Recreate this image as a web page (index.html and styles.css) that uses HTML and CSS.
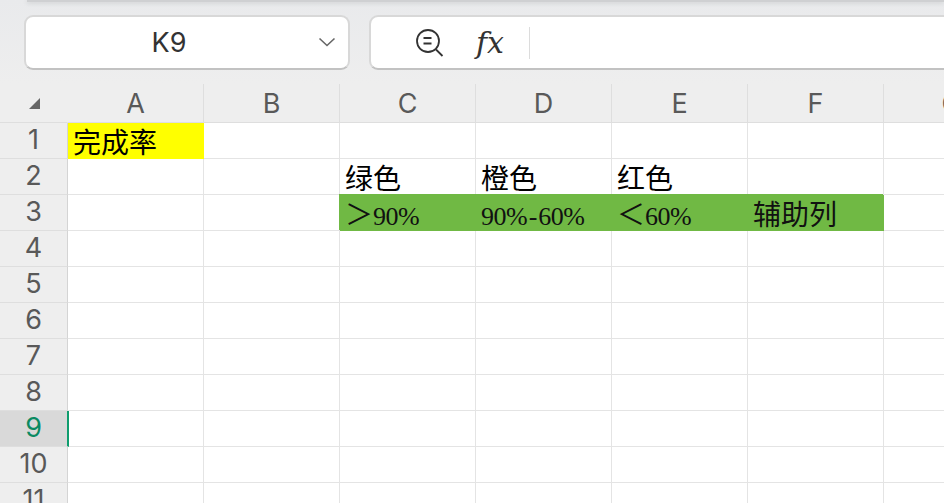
FILE: index.html
```html
<!DOCTYPE html>
<html lang="en">
<head>
    <meta charset="UTF-8">
    <title>K9</title>
    <link rel="stylesheet" href="styles.css">
</head>
<body>
    <div class="toolbar">
        <div class="top-edge"></div>
        <div class="boxes">
            <div class="name-box">
                <span class="name-text">K9</span>
                <svg class="chevron" width="18" height="10" viewBox="0 0 18 10"><path d="M1.5 1.5 L9 8.5 L16.5 1.5" fill="none" stroke="#666" stroke-width="1.6"/></svg>
            </div>
            <div class="formula-box">
                <svg class="zoom-icon" width="30" height="30" viewBox="0 0 30 30">
                    <circle cx="13" cy="13" r="11" fill="none" stroke="#333" stroke-width="1.8"/>
                    <path d="M8.5 10 H16.5 M8.5 15.5 H16.5 M21 21.5 L27.5 28" fill="none" stroke="#333" stroke-width="1.8"/>
                </svg>
                <span class="fx">fx</span>
                <span class="divider"></span>
            </div>
        </div>
    </div>

    <div class="sheet">
        <div class="corner"><span class="corner-mark"></span></div>
        <div class="col-head">A</div>
        <div class="col-head">B</div>
        <div class="col-head">C</div>
        <div class="col-head">D</div>
        <div class="col-head">E</div>
        <div class="col-head">F</div>
        <div class="col-head">G</div>

        <div class="row-head">1</div>
        <div class="cell yellow">完成率</div>
        <div class="cell"></div><div class="cell"></div><div class="cell"></div><div class="cell"></div><div class="cell"></div><div class="cell"></div>

        <div class="row-head">2</div>
        <div class="cell"></div><div class="cell"></div>
        <div class="cell">绿色</div>
        <div class="cell">橙色</div>
        <div class="cell">红色</div>
        <div class="cell"></div><div class="cell"></div>

        <div class="row-head">3</div>
        <div class="cell"></div><div class="cell"></div>
        <div class="cell green">＞<span class="num">90%</span></div>
        <div class="cell green"><span class="num">90%<span class="dash">-</span>60%</span></div>
        <div class="cell green">＜<span class="num">60%</span></div>
        <div class="cell green">辅助列</div>
        <div class="cell"></div>

        <div class="row-head">4</div>
        <div class="cell"></div><div class="cell"></div><div class="cell"></div><div class="cell"></div><div class="cell"></div><div class="cell"></div><div class="cell"></div>
        <div class="row-head">5</div>
        <div class="cell"></div><div class="cell"></div><div class="cell"></div><div class="cell"></div><div class="cell"></div><div class="cell"></div><div class="cell"></div>
        <div class="row-head">6</div>
        <div class="cell"></div><div class="cell"></div><div class="cell"></div><div class="cell"></div><div class="cell"></div><div class="cell"></div><div class="cell"></div>
        <div class="row-head">7</div>
        <div class="cell"></div><div class="cell"></div><div class="cell"></div><div class="cell"></div><div class="cell"></div><div class="cell"></div><div class="cell"></div>
        <div class="row-head">8</div>
        <div class="cell"></div><div class="cell"></div><div class="cell"></div><div class="cell"></div><div class="cell"></div><div class="cell"></div><div class="cell"></div>
        <div class="row-head active">9</div>
        <div class="cell"></div><div class="cell"></div><div class="cell"></div><div class="cell"></div><div class="cell"></div><div class="cell"></div><div class="cell"></div>
        <div class="row-head">10</div>
        <div class="cell"></div><div class="cell"></div><div class="cell"></div><div class="cell"></div><div class="cell"></div><div class="cell"></div><div class="cell"></div>
        <div class="row-head">11</div>
        <div class="cell"></div><div class="cell"></div><div class="cell"></div><div class="cell"></div><div class="cell"></div><div class="cell"></div><div class="cell"></div>
    </div>
</body>
</html>
```

FILE: styles.css
```css
html, body {
    margin: 0;
    height: 503px;
    overflow: hidden;
    background: #fff;
}
body {
    width: 944px;
    font-family: Inter, "Noto Sans CJK SC", sans-serif;
}
.toolbar {
    height: 84px;
    box-sizing: border-box;
    background: linear-gradient(#e9eaec, #eeeeee);
    overflow: hidden;
}
.top-edge {
    height: 2px;
    margin-left: 27px;
    background: #cfd0d2;
    box-shadow: 0 1px 4px #c4c5c7;
}
.boxes {
    display: flex;
    gap: 19px;
    padding: 13px 0 0 24px;
}
.name-box, .formula-box {
    display: flex;
    align-items: center;
    height: 55px;
    box-sizing: border-box;
    background: #fff;
    border: 2px solid #d8d8d8;
    border-bottom-color: #c2c2c2;
    border-radius: 9px;
}
.name-box {
    width: 326px;
    position: relative;
    justify-content: center;
}
.name-text {
    font-size: 27px;
    color: #333;
    margin-right: 36px;
}
.chevron {
    position: absolute;
    right: 12px;
    top: 20px;
}
.formula-box {
    flex: 1;
    margin-right: -12px;
    padding-left: 44px;
}
.fx {
    margin-left: 31px;
    font-family: "DejaVu Serif", serif;
    font-style: italic;
    font-size: 30px;
    color: #333;
}
.divider {
    width: 1px;
    height: 32px;
    margin-left: 25px;
    background: #dcdcdc;
}
.sheet {
    display: grid;
    grid-template-columns: 68px repeat(7, 136px);
    grid-template-rows: 39px repeat(11, 36px);
}
.corner, .col-head, .row-head {
    background: #eeeeee;
    color: #595959;
    font-size: 27px;
    display: flex;
    align-items: center;
    justify-content: center;
    box-sizing: border-box;
}
.corner {
    border-bottom: 1px solid #dedede;
    border-right: 1px solid #eeeeee;
}
.corner-mark {
    width: 0;
    height: 0;
    margin-left: 2px;
    border-left: 11px solid transparent;
    border-bottom: 11px solid #666;
}
.col-head {
    border-right: 1px solid #dedede;
    border-bottom: 1px solid #dedede;
}
.row-head {
    border-right: 1px solid #d4d4d4;
    border-bottom: 1px solid #dedede;
    padding-bottom: 2px;
}
.row-head.active {
    background: #d9d9d9;
    color: #0b8a62;
    border-right: 2px solid #0f9d6e;
    margin-right: -1px;
    position: relative;
}
.cell {
    box-sizing: border-box;
    border-right: 1px solid #e4e4e4;
    border-bottom: 1px solid #e4e4e4;
    padding: 4px 0 0 5px;
    font-family: "Liberation Serif", "Noto Sans CJK SC", serif;
    font-size: 28px;
    line-height: 34px;
    color: #000;
    white-space: nowrap;
    overflow: hidden;
}
.yellow {
    background: #ffff00;
    border-color: #ffff00;
}
.green {
    background: #70b944;
    border-color: #70b944;
    box-shadow: -1px -1px 0 #70b944;
    color: #111;
    overflow: visible;
}
.num {
    font-size: 26px;
    letter-spacing: -0.5px;
}
.dash {
    margin: 0 1.5px;
}
```
